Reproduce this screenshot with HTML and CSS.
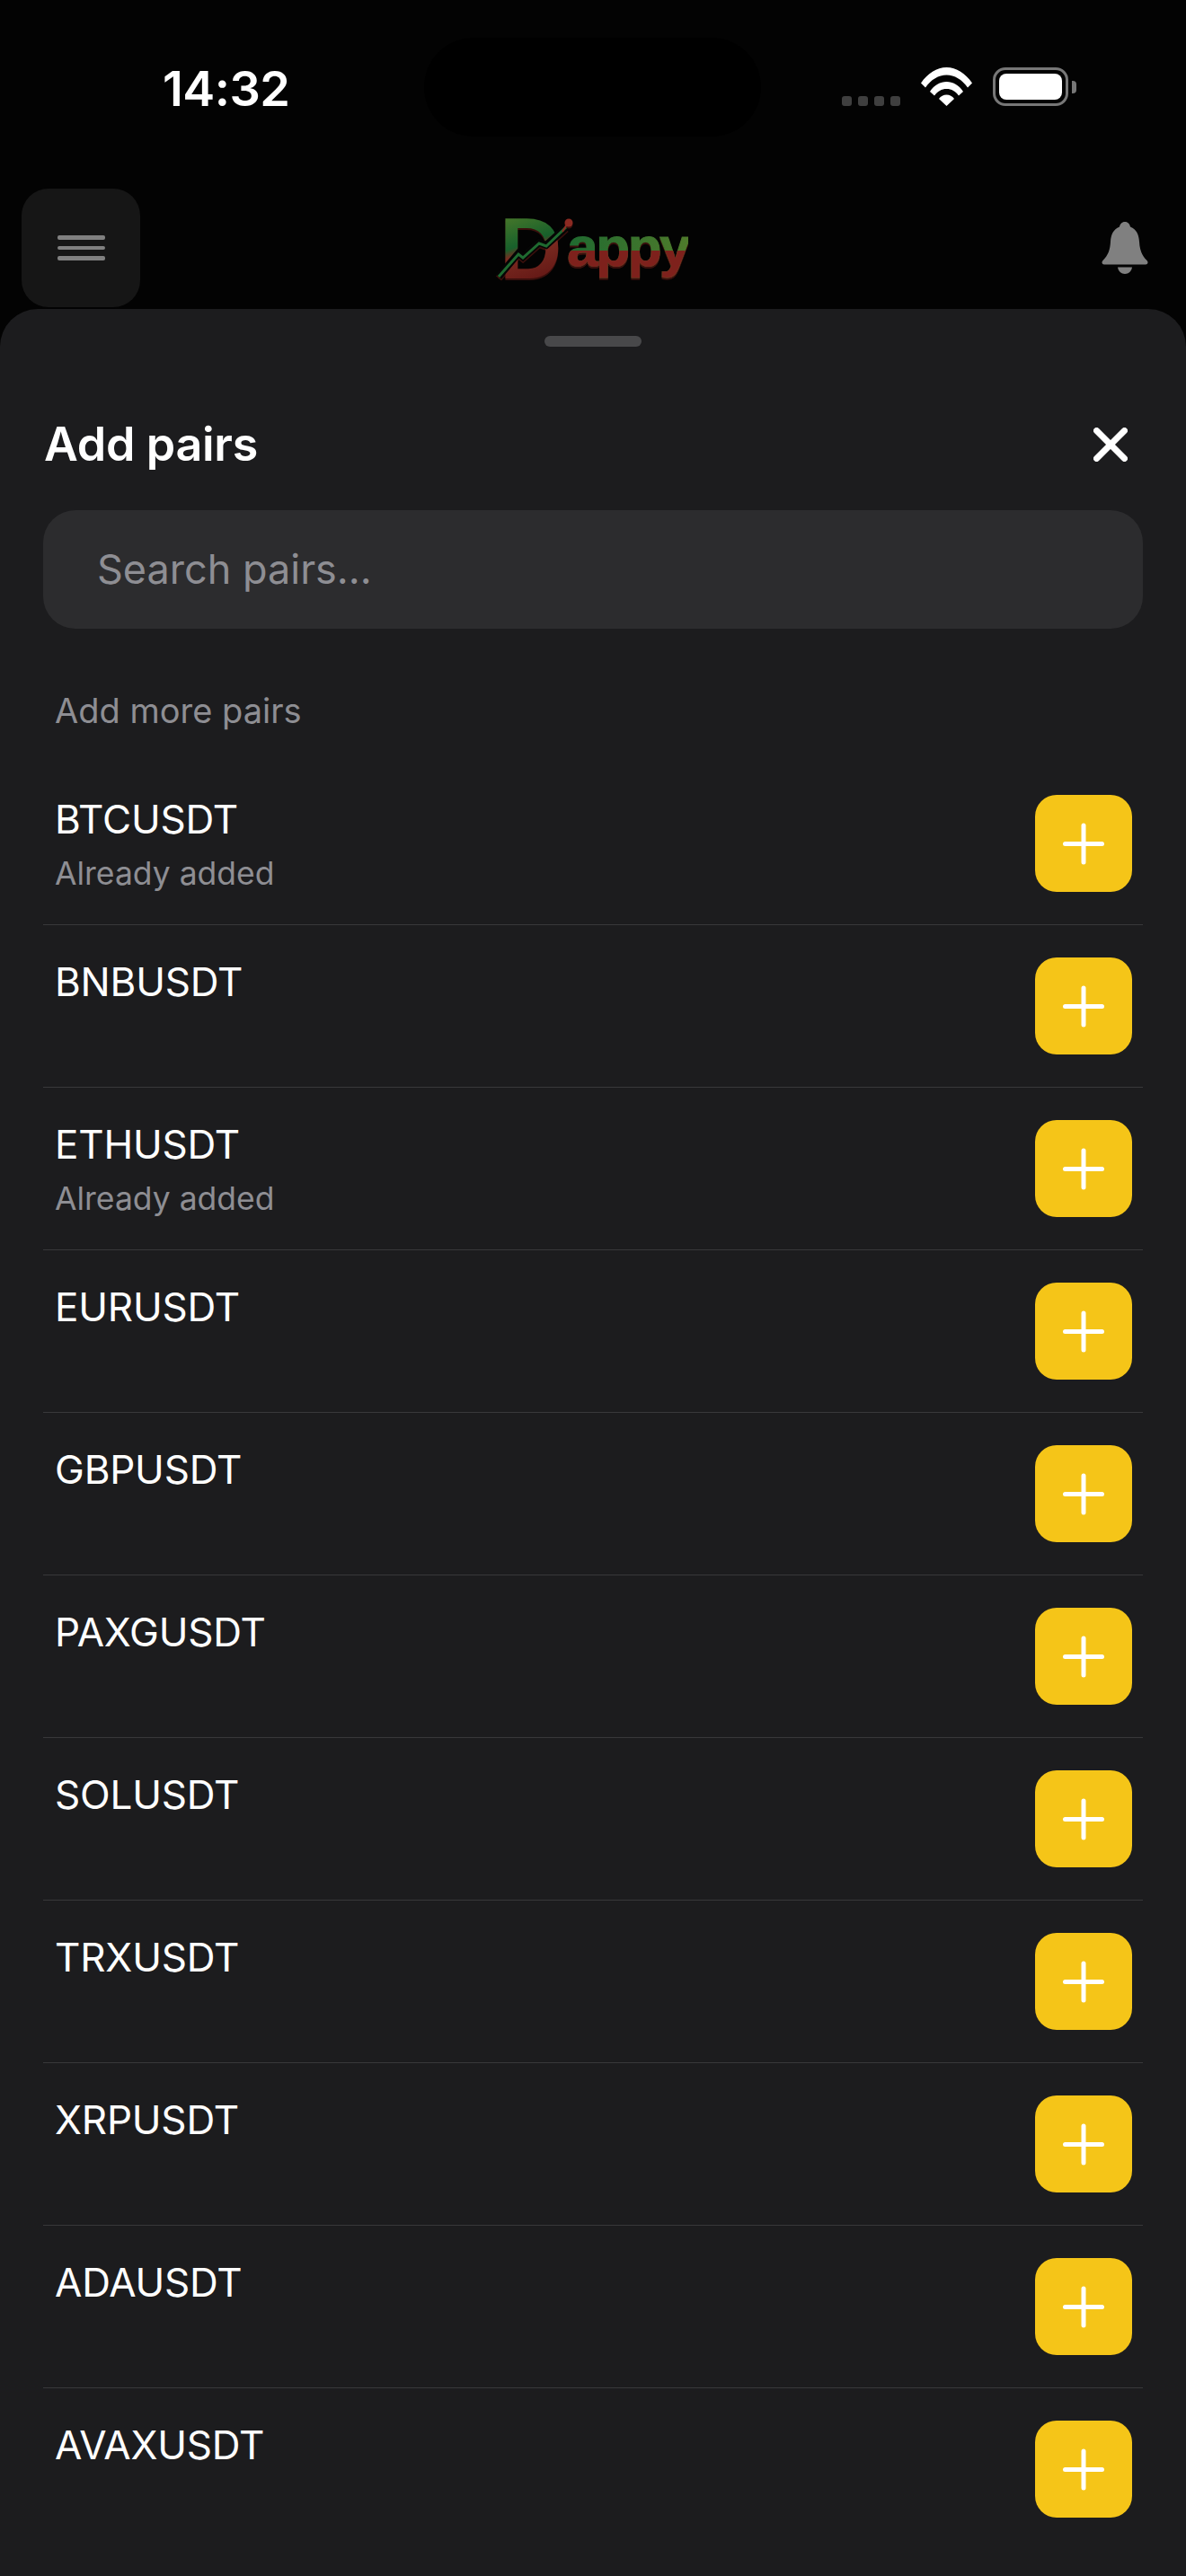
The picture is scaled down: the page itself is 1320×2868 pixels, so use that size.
FILE: index.html
```html
<!DOCTYPE html>
<html lang="en">
  <head>
    <meta charset="UTF-8" />
    <meta name="viewport" content="width=device-width, initial-scale=1.0" />
    <title>Add pairs</title>
    <link rel="stylesheet" href="styles.css">
  </head>
  <body>
    <div class="phone">
      <div class="status-bar">
        <span class="time">14:32</span>
        <div class="island"></div>
        <div class="status-icons">
          <div class="signal"><i></i><i></i><i></i><i></i></div>
          <svg class="wifi" width="57" height="43" viewBox="0 0 57 43">
            <path d="M0 17.5C7.5 6.5 17.5 0 28.5 0S49.5 6.5 57 17.5L52 22.5C45.5 13.5 37.5 8.5 28.5 8.5S11.5 13.5 5 22.5Z" fill="#fff"/>
            <path d="M10 27C15 19.500 21.500 16 28.500 16S42 19.500 47 27L42 31.500C38.500 26.500 34 24 28.500 24S18.500 26.500 15 31.500Z" fill="#fff"/>
            <path d="M20 35C22 32 25 30.500 28.500 30.500S35 32 37 35L28.500 43Z" fill="#fff"/>
          </svg>
          <div class="battery">
            <div class="battery-body"><div class="battery-level"></div></div>
            <div class="battery-cap"></div>
          </div>
        </div>
      </div>

      <div class="app-header">
        <button class="menu-btn">
          <span></span><span></span><span></span>
        </button>
        <div class="logo">
          <span class="logo-d">D</span>
          <svg class="logo-arrow" width="84" height="76" viewBox="0 0 84 76">
            <path d="M-1 70L21 44L26 48L44 32L52 35L74 15" fill="none" stroke="#050505" stroke-width="8"/>
            <path d="M-1 70L21 45L26 49L44 33L52 36L74 15" fill="none" stroke="#1f6a30" stroke-width="3"/>
            <path d="M70 20L76 10" fill="none" stroke="#8b2a22" stroke-width="2"/>
            <circle cx="77" cy="10" r="4.500" fill="#8b2a22"/>
          </svg>
          <span class="logo-text">appy</span>
        </div>
        <svg class="bell" width="52" height="58" viewBox="0 0 52 58">
          <path d="M26 0C22.500 0 20.500 2.500 20 5.500C13.500 8 10.500 14 10 22C9.500 31 7.500 37 1.500 43C0 44.500 0 47.500 3 47.500H49C52 47.500 52 44.500 50.500 43C44.500 37 42.500 31 42 22C41.500 14 38.500 8 32 5.500C31.500 2.500 29.500 0 26 0Z" fill="#808080"/>
          <path d="M18 50.500H34C33.500 55 30 58 26 58S18.500 55 18 50.500Z" fill="#808080"/>
        </svg>
      </div>

      <div class="sheet">
        <div class="handle"></div>
        <div class="sheet-head">
          <h1>Add pairs</h1>
          <svg class="close" width="38" height="38" viewBox="0 0 38 38">
            <path d="M3.500 3.500L34.500 34.500M34.500 3.500L3.500 34.500" stroke="#fff" stroke-width="7" stroke-linecap="round"/>
          </svg>
        </div>
        <div class="search">Search pairs...</div>
        <p class="section-label">Add more pairs</p>

        <div class="pair">
          <div class="pair-info"><div class="pair-name">BTCUSDT</div><div class="pair-note">Already added</div></div>
          <button class="add-btn"></button>
        </div>
        <div class="pair">
          <div class="pair-info"><div class="pair-name">BNBUSDT</div></div>
          <button class="add-btn"></button>
        </div>
        <div class="pair">
          <div class="pair-info"><div class="pair-name">ETHUSDT</div><div class="pair-note">Already added</div></div>
          <button class="add-btn"></button>
        </div>
        <div class="pair">
          <div class="pair-info"><div class="pair-name">EURUSDT</div></div>
          <button class="add-btn"></button>
        </div>
        <div class="pair">
          <div class="pair-info"><div class="pair-name">GBPUSDT</div></div>
          <button class="add-btn"></button>
        </div>
        <div class="pair">
          <div class="pair-info"><div class="pair-name">PAXGUSDT</div></div>
          <button class="add-btn"></button>
        </div>
        <div class="pair">
          <div class="pair-info"><div class="pair-name">SOLUSDT</div></div>
          <button class="add-btn"></button>
        </div>
        <div class="pair">
          <div class="pair-info"><div class="pair-name">TRXUSDT</div></div>
          <button class="add-btn"></button>
        </div>
        <div class="pair">
          <div class="pair-info"><div class="pair-name">XRPUSDT</div></div>
          <button class="add-btn"></button>
        </div>
        <div class="pair">
          <div class="pair-info"><div class="pair-name">ADAUSDT</div></div>
          <button class="add-btn"></button>
        </div>
        <div class="pair last">
          <div class="pair-info"><div class="pair-name">AVAXUSDT</div></div>
          <button class="add-btn"></button>
        </div>
      </div>
    </div>
  </body>
</html>
```

FILE: styles.css
```css
html, body {
  margin: 0;
  padding: 0;
  background-color: #030303;
}

.phone {
  width: 1320px;
  height: 2868px;
  overflow: hidden;
  font-family: Inter, "Liberation Sans", sans-serif;
  color: #fff;
}

/* Status bar */
.status-bar {
  height: 210px;
  box-sizing: border-box;
  padding-top: 42px;
  display: flex;
  align-items: flex-start;
  position: relative;
}

.time {
  width: 140px;
  margin-left: 181px;
  margin-top: 27px;
  font-size: 54px;
  line-height: 60px;
  font-weight: 600;
  letter-spacing: -0.5px;
}

.island {
  width: 375px;
  height: 110px;
  margin-left: 151px;
  border-radius: 55px;
  background-color: #000;
}

.status-icons {
  display: flex;
  align-items: flex-end;
  height: 76px;
  margin-left: 90px;
}

.signal {
  display: flex;
  gap: 7px;
  margin-bottom: 0;
}

.signal i {
  display: block;
  width: 11px;
  height: 11px;
  border-radius: 3px;
  background-color: #3f3f3f;
}

.wifi {
  margin-left: 23px;
}

.battery {
  display: flex;
  align-items: center;
  margin-left: 23px;
}

.battery-body {
  width: 84px;
  height: 43px;
  box-sizing: border-box;
  padding: 4px;
  border: 3px solid #777;
  border-radius: 14px;
}

.battery-level {
  height: 100%;
  border-radius: 8px;
  background-color: #fff;
}

.battery-cap {
  width: 5px;
  height: 14px;
  margin-left: 4px;
  border-radius: 0 4px 4px 0;
  background-color: #777;
}

/* App header behind the sheet */
.app-header {
  height: 134px;
  display: flex;
  align-items: flex-start;
  position: relative;
}

.menu-btn {
  width: 132px;
  height: 132px;
  margin-left: 24px;
  padding: 0;
  border: none;
  border-radius: 30px;
  background-color: #161616;
  display: flex;
  flex-direction: column;
  align-items: center;
  justify-content: center;
  gap: 7px;
}

.menu-btn span {
  display: block;
  width: 53px;
  height: 4.500px;
  border-radius: 2px;
  background-color: #808080;
}

.logo {
  width: 216px;
  height: 80px;
  margin-left: 400px;
  margin-top: 32px;
  position: relative;
  display: flex;
  align-items: flex-start;
  filter: drop-shadow(0 2px 0 #3a0f0c);
}

.logo-d {
  font-family: "Liberation Sans", sans-serif;
  font-size: 96px;
  line-height: 76px;
  font-weight: 700;
  margin-top: -3px;
  background: linear-gradient(160deg, #4d7a2a 0%, #17602b 42%, #7a2a20 52%, #5c1212 100%);
  -webkit-background-clip: text;
  background-clip: text;
  color: transparent;
}

.logo-text {
  font-family: "Liberation Sans", sans-serif;
  font-size: 62px;
  line-height: 80px;
  font-weight: 700;
  letter-spacing: -2.500px;
  margin-left: 6px;
  margin-top: -7px;
  -webkit-text-stroke: 1px transparent;
  background:
    linear-gradient(180deg, transparent 55%, #7e211c 55%),
    linear-gradient(90deg, #1f6a30 0%, #4e7a2b 100%);
  -webkit-background-clip: text;
  background-clip: text;
  color: transparent;
}

.logo-arrow {
  position: absolute;
  left: 0;
  top: -4px;
  overflow: visible;
}

.bell {
  position: absolute;
  left: 1226px;
  top: 37px;
}

/* Bottom sheet */
.sheet {
  height: 2524px;
  box-sizing: border-box;
  padding: 0 48px;
  background-color: #1c1c1e;
  border-radius: 42px 42px 0 0;
}

.handle {
  width: 108px;
  height: 12px;
  margin: 0 auto;
  position: relative;
  top: 30px;
  border-radius: 6px;
  background-color: #48484a;
}

.sheet-head {
  display: flex;
  justify-content: space-between;
  align-items: center;
  padding-top: 107px;
  height: 64px;
}

h1 {
  margin: 0;
  margin-left: 1px;
  font-size: 52px;
  line-height: 64px;
  font-weight: 600;
  letter-spacing: -0.3px;
}

.close {
  margin-right: 17px;
}

.search {
  height: 132px;
  margin-top: 41px;
  padding-left: 60px;
  border-radius: 36px;
  background-color: #2c2c2e;
  color: #8e8e93;
  font-size: 45px;
  line-height: 132px;
}

.section-label {
  margin: 66px 0 33px 13px;
  height: 50px;
  color: #8e8e93;
  font-size: 38px;
  line-height: 50px;
}

.pair {
  height: 181px;
  box-sizing: border-box;
  padding-left: 13px;
  padding-right: 12px;
  display: flex;
  justify-content: space-between;
  border-bottom: 1px solid #38383a;
}

.pair.last {
  border-bottom: none;
}

.pair-info {
  padding-top: 36px;
}

.pair-name {
  font-size: 44px;
  line-height: 54px;
  letter-spacing: -0.2px;
}

.pair-note {
  margin-top: 11px;
  color: #8e8e93;
  font-size: 35.500px;
  line-height: 46px;
}

.add-btn {
  width: 108px;
  height: 108px;
  margin-top: 36px;
  padding: 0;
  border: none;
  border-radius: 24px;
  background-color: #f5c518;
  position: relative;
}

.add-btn::before,
.add-btn::after {
  content: "";
  position: absolute;
  left: 31px;
  top: 52px;
  width: 46px;
  height: 5px;
  border-radius: 3px;
  background-color: #fff;
}

.add-btn::after {
  transform: rotate(90deg);
}
```
